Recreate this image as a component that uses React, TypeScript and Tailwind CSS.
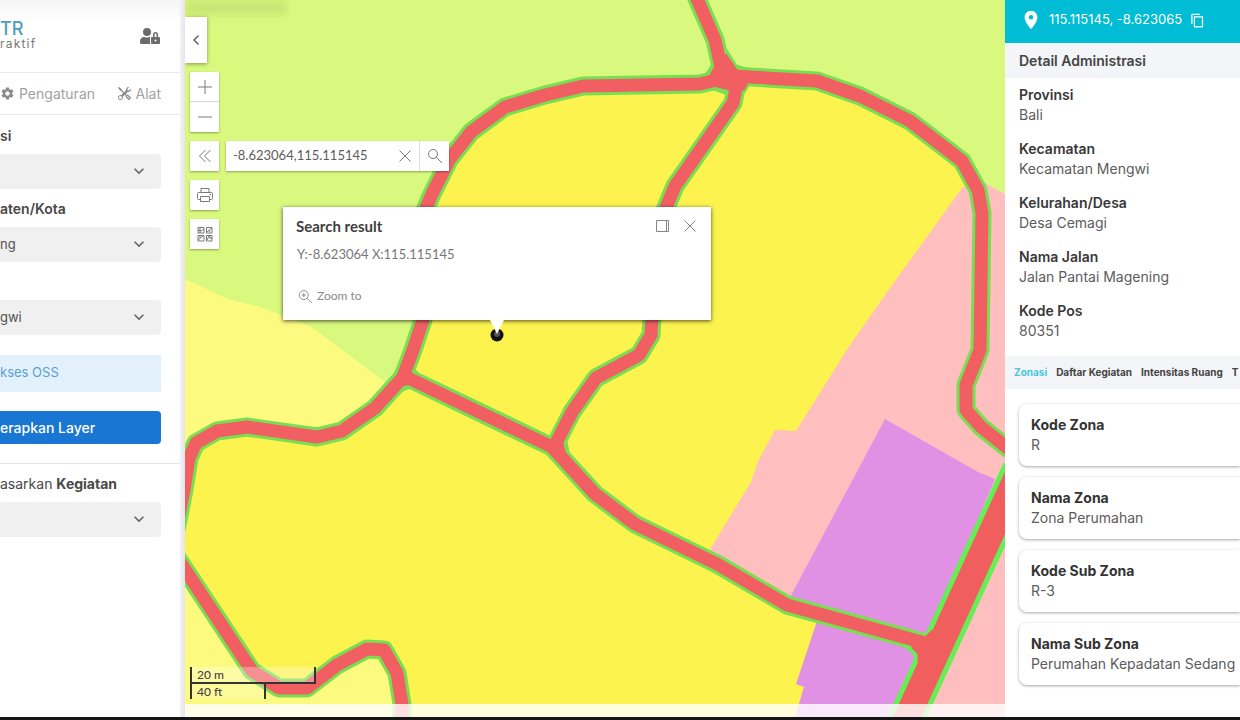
import type { ReactNode } from "react";
import { FaUserLock } from "react-icons/fa";
import { BsTools } from "react-icons/bs";
import { MdContentCopy, MdExpandMore, MdLocationOn, MdSettings } from "react-icons/md";
import { ChevronLeft } from "lucide-react";

const thinRoads = [
  "M404 374L413 350L423 320L423 215L432 194L449 160L471 132L505 107L545 95L583 86L700 84L733 76L817 81L860 96L910 121L962 161L978 190L982 213L980 350L966 385L966 410L981 427L1010 450",
  "M695 -6L715 40L723 76",
  "M738 78L733 103L675 186L663 215L652 318L651 335L639 355L596 378L572 412L554 447",
  "M404 376L552 447L595 494L635 524L717 564L787 605L925 643",
  "M404 376L375 408L342 431L317 437L247 427L217 431L196 443L189 458L184 490L176 530",
  "M176 556L252 671L279 688L307 688L337 665L367 649L384 650L397 673L402 704L402 724",
];

function Roads() {
  return (
    <g fill="none" strokeLinejoin="round">
      <g stroke="#79df52">
        {thinRoads.map((d) => (
          <path key={d} d={d} strokeWidth="19" />
        ))}
        <path d="M712 66L726 50L736 66L756 72L744 92L728 94L700 84Z" fill="#79df52" strokeWidth="3" />
        <path d="M402 360L416 372L424 382L402 390L390 384Z" fill="#79df52" strokeWidth="3" />
        <path d="M553 434L565 438L569 456L562 462L541 447Z" fill="#79df52" strokeWidth="3" />
      </g>
      <path d="M1020 470L904 724" stroke="#66ee55" strokeWidth="36" />
      <path d="M917 655L913 650L906 645L930 640L934 625L940 660L917 664Z" fill="#66ee55" stroke="#66ee55" strokeWidth="6" />
      <g stroke="#f15f62">
        {thinRoads.map((d) => (
          <path key={d} d={d} strokeWidth="13" />
        ))}
        <path d="M715 66L726 54L737 70L752 76L744 90L730 90L705 84Z" fill="#f15f62" strokeWidth="1" />
        <path d="M403 364L413 374L420 382L402 386L393 383Z" fill="#f15f62" strokeWidth="1" />
        <path d="M554 437L562 440L566 455L561 458L543 446Z" fill="#f15f62" strokeWidth="1" />
        <path d="M1020 470L904 724" stroke="#f05f5e" strokeWidth="26" />
        <path d="M912 639L924 638L932 630L936 666L918 662L918 654L912 648Z" fill="#f05f5e" />
      </g>
    </g>
  );
}

function ZoningMap() {
  return (
    <svg
      className="absolute inset-0 h-full w-full"
      viewBox="185 0 820 717"
      preserveAspectRatio="xMidYMid slice"
      aria-hidden="true"
    >
      <rect x="-400" y="-400" width="2000" height="1600" fill="#d8f97e" />
      <path d="M185 279L228 299L260 307L310 326L385 382L375 408L315 437L185 460Z" fill="#fdfa80" />
      <path
        d="M185 717V470L196 443L247 428L317 437L375 408L404 376L423 320V215L449 160L505 107L583 86L733 78L817 81L910 121L962 161L980 200L960 440L850 640V717Z"
        fill="#fdf34f"
      />
      <path d="M185 717V565L252 671L279 688L307 688L367 649L384 650L402 717Z" fill="#fdfa80" />
      <path
        d="M962 188L979 180L1005 194V717H900L925 643L785 605L709 551L751 482L758 461L775 430L796 431L848 348L885 295Z"
        fill="#ffbfbf"
      />
      <path d="M885 419L978 472L995 479L927 640L787 603Z" fill="#e091e4" />
      <path d="M820 612L796 684L804 687L795 717H900L925 643Z" fill="#e091e4" />
      <Roads />
    </svg>
  );
}

function MapButton({ label, children }: { label: string; children: ReactNode }) {
  return (
    <button
      type="button"
      aria-label={label}
      className="flex h-[30px] w-[29px] items-center justify-center bg-white text-[#7a7a7a] shadow-[0_1px_2px_rgba(0,0,0,0.35)]"
    >
      {children}
    </button>
  );
}

function Line({ d, size = 16 }: { d: string; size?: number }) {
  return (
    <svg width={size} height={size} viewBox="0 0 16 16" fill="none" stroke="currentColor" strokeWidth="1">
      <path d={d} />
    </svg>
  );
}

const icons = {
  plus: "M1 8H15M8 1V15",
  minus: "M1 8H15",
  collapse: "M8.500 2L2.500 8L8.500 14M13.500 2L7.500 8L13.500 14",
  print: "M4 5.500V1.500H12V5.500M3.500 12.500H1.500Q.5 12.500 .5 11.500V6.500Q.5 5.500 1.500 5.500H14.500Q15.500 5.500 15.500 6.500V11.500Q15.500 12.500 14.500 12.500H12.500M3.500 9.500H12.500V14.500H3.500ZM12.500 7.500H14",
  close: "M2.500 2.500L13.500 13.500M13.500 2.500L2.500 13.500",
  search: "M10.500 6A4.500 4.500 0 1 1 1.500 6A4.500 4.500 0 1 1 10.500 6M9.300 9.300L15 15",
  zoom: "M11 6.500A4.800 4.800 0 1 1 1.400 6.500A4.800 4.800 0 1 1 11 6.500M9.700 10L15 15M4 6.500H8.400M6.200 4.300V8.700",
  dock: "M2.500 2.500H14.500V13.500H2.500ZM12.500 2.500V13.500",
  grid: "M1 1.500H7V7H1ZM9.500 1.500H15V7H9.500ZM1 9.500H7V15H1ZM9.500 9.500H15V15H9.500ZM1 4L4 5L7 3M3 1.500V7M10 6L15 2M11.500 4L13 6M1 14L6 10M3 10V12M10 14L12 10L15 13M12 12H15",
};

function SelectField({ label, bold, value }: { label: ReactNode; bold?: boolean; value: string }) {
  return (
    <label className="block">
      <span className={`block h-5 text-[14px] leading-5 whitespace-nowrap text-[#484848] ${bold ? "font-semibold" : ""}`}>
        {label}
      </span>
      <span className="relative mt-2 block">
        <select className="block h-[35px] w-full appearance-none rounded-r bg-[#f0f0f0] text-[13px] text-[#505050]">
          <option>{value}</option>
        </select>
        <MdExpandMore className="pointer-events-none absolute top-[7px] right-3 size-5 text-[#666]" />
      </span>
    </label>
  );
}

function Sidebar() {
  return (
    <aside className="w-[180px] shrink-0 overflow-hidden bg-white">
      <header className="flex h-[73px] items-start justify-between border-b border-[#e8e8e8] bg-linear-to-b from-[#f4f4f4] to-white to-30% pt-5 pr-5">
        <div>
          <div className="text-[18px] leading-[18px] font-medium text-[#4a9fc0]">TR</div>
          <div className="text-[12px] leading-[12px] tracking-widest text-[#777]">raktif</div>
        </div>
        <button type="button" aria-label="Masuk" className="mt-[6px]">
          <FaUserLock className="size-5 text-[#6b6b6b]" />
        </button>
      </header>
      <nav className="flex h-[42px] items-center justify-between border-b border-[#e8e8e8] pr-[19px] text-[14px] text-[#a2a2a2]">
        <a href="#pengaturan" className="flex items-center gap-1">
          <MdSettings className="size-[15px] text-[#8a8a8a]" />
          Pengaturan
        </a>
        <a href="#alat" className="flex items-center gap-[5px]">
          <BsTools className="size-[13px] text-[#8a8a8a]" />
          Alat
        </a>
      </nav>
      <form className="flex flex-col pt-[11px]">
        <div className="flex flex-col gap-[10px] pr-[19px]">
          <SelectField label="si" bold value="" />
          <SelectField label="aten/Kota" bold value="ng" />
          <SelectField label="" value="gwi" />
        </div>
        <div className="mt-5 mr-[19px] h-[37px] bg-[#e3f1fd] text-[13px] leading-[35px] text-[#5b9fd0]">kses OSS</div>
        <button
          type="button"
          className="mt-[19px] mr-[19px] flex h-[33px] items-center rounded-r bg-[#1976d2] text-[14px] font-medium text-white"
        >
          erapkan Layer
        </button>
        <div className="mt-[19px] border-t border-[#e4e4e4] pt-[10px] pr-[19px]">
          <SelectField
            label={
              <>
                asarkan <b className="font-bold">Kegiatan</b>
              </>
            }
            value=""
          />
        </div>
      </form>
    </aside>
  );
}

function SearchPopup() {
  return (
    <section className="absolute top-[207px] left-[98px] w-[428px] bg-white font-[Lato,sans-serif] shadow-[0_1px_4px_rgba(0,0,0,0.7)]">
      <div className="flex items-center justify-between pt-[9px] pr-[13px] pl-[13px]">
        <h2 className="text-[15px] leading-5 font-bold text-[#404040]">Search result</h2>
        <div className="flex gap-3 text-[#858585]">
          <button type="button" aria-label="Dock">
            <Line d={icons.dock} />
          </button>
          <button type="button" aria-label="Close">
            <Line d={icons.close} />
          </button>
        </div>
      </div>
      <p className="mt-2 pl-[14px] text-[13px] leading-5 text-[#777]">Y:-8.623064 X:115.115145</p>
      <button type="button" className="mt-[22px] mb-[14px] ml-[15px] flex items-center gap-1 text-[12px] leading-5 text-[#8a8a8a]">
        <Line d={icons.zoom} size={15} />
        Zoom to
      </button>
      <svg className="absolute top-full left-[204px]" width="20" height="23" viewBox="0 0 20 23" aria-hidden="true">
        <circle cx="10" cy="15" r="6.500" fill="#111" />
        <circle cx="10" cy="14" r="3" fill="#555" />
        <path d="M3 0H17L10 14Z" fill="#fff" />
      </svg>
    </section>
  );
}

function MapView() {
  return (
    <main className="relative min-w-0 flex-1 overflow-hidden">
      <ZoningMap />
      <div className="absolute top-0 left-0 h-[15px] w-[102px] bg-black/7 blur-[3px]" />
      <button
        type="button"
        aria-label="Tutup panel"
        className="absolute top-[17px] left-0 flex h-[46px] w-[22px] items-center justify-center bg-white text-[#555] shadow-[0_1px_4px_rgba(0,0,0,0.4)]"
      >
        <ChevronLeft className="size-4" />
      </button>
      <div className="absolute top-[72px] left-[5px] flex flex-col gap-[9px]">
        <div className="flex flex-col divide-y divide-[#ddd]">
          <MapButton label="Zoom in">
            <Line d={icons.plus} />
          </MapButton>
          <MapButton label="Zoom out">
            <Line d={icons.minus} />
          </MapButton>
        </div>
        <div className="flex gap-[7px]">
          <MapButton label="Collapse">
            <Line d={icons.collapse} />
          </MapButton>
          <form className="flex h-[30px] bg-white text-[#7a7a7a] shadow-[0_1px_2px_rgba(0,0,0,0.35)]">
            <input
              aria-label="Search"
              defaultValue="-8.623064,115.115145"
              className="w-[164px] pl-[7px] font-[Lato,sans-serif] text-[13px] text-[#5c5c5c] outline-none"
            />
            <button type="button" aria-label="Clear" className="flex w-[29px] items-center justify-center">
              <Line d={icons.close} />
            </button>
            <button type="button" aria-label="Find" className="flex w-[30px] items-center justify-center border-l border-[#ddd]">
              <Line d={icons.search} />
            </button>
          </form>
        </div>
        <MapButton label="Print">
          <Line d={icons.print} />
        </MapButton>
        <MapButton label="Basemap">
          <Line d={icons.grid} />
        </MapButton>
      </div>
      <SearchPopup />
      <div className="absolute bottom-[18px] left-[5px] font-[Lato,sans-serif] text-[12px] leading-[15px] font-medium text-[#444]">
        <div className="w-[126px] border-r-2 border-b-2 border-l-2 border-[#333] bg-white/30 pl-[5px]">20 m</div>
        <div className="w-[76px] border-r-2 border-l-2 border-[#333] bg-white/20 pl-[5px]">40 ft</div>
      </div>
      <div className="absolute inset-x-0 bottom-0 h-[13px] bg-white/80" />
    </main>
  );
}

const administration = [
  ["Provinsi", "Bali"],
  ["Kecamatan", "Kecamatan Mengwi"],
  ["Kelurahan/Desa", "Desa Cemagi"],
  ["Nama Jalan", "Jalan Pantai Magening"],
  ["Kode Pos", "80351"],
];

const zones = [
  ["Kode Zona", "R"],
  ["Nama Zona", "Zona Perumahan"],
  ["Kode Sub Zona", "R-3"],
  ["Nama Sub Zona", "Perumahan Kepadatan Sedang"],
];

function DetailPanel() {
  return (
    <aside className="w-[235px] shrink-0 overflow-hidden bg-white text-[14px] whitespace-nowrap text-[#5c5c5c]">
      <header className="flex h-[43px] items-center bg-[#00bcd4] pb-[3px] pl-[15px] text-[13px] text-white">
        <MdLocationOn className="size-[22px]" />
        <span className="ml-[7px]">115.115145, -8.623065</span>
        <button type="button" aria-label="Salin" className="ml-2">
          <MdContentCopy className="size-[15px]" />
        </button>
      </header>
      <h2 className="h-[35px] bg-[#f4f5f9] pl-[14px] leading-[35px] font-semibold text-[#444]">Detail Administrasi</h2>
      <dl className="flex h-[278px] flex-col gap-[14px] pt-[7px] pl-[14px]">
        {administration.map(([name, value]) => (
          <div key={name} className="leading-5">
            <dt className="font-semibold text-[#383838]">{name}</dt>
            <dd>{value}</dd>
          </div>
        ))}
      </dl>
      <nav className="flex h-[33px] items-center gap-[9px] bg-[#f4f5f9] pl-[9px] text-[10px] font-bold text-[#444]">
        <a href="#zonasi" className="text-[#45c8dc]">
          Zonasi
        </a>
        <a href="#kegiatan">Daftar Kegiatan</a>
        <a href="#intensitas">Intensitas Ruang</a>
        <a href="#t">T</a>
      </nav>
      <dl className="flex flex-col gap-[11px] pt-[15px] pb-4 pl-[14px]">
        {zones.map(([name, value]) => (
          <div
            key={name}
            className="h-[62px] rounded-l-lg bg-white pt-[11px] pl-3 leading-5 shadow-[0_1px_3px_rgba(0,0,0,0.35)]"
          >
            <dt className="font-bold text-[#333]">{name}</dt>
            <dd>{value}</dd>
          </div>
        ))}
      </dl>
    </aside>
  );
}

export default function App() {
  return (
    <div className="flex min-h-screen border-b-3 border-[#151515] bg-white font-[Inter,sans-serif]">
      <Sidebar />
      <div className="w-[5px] shrink-0 bg-linear-to-r from-[#f4f4f6] to-[#e4e4ea]" />
      <MapView />
      <DetailPanel />
    </div>
  );
}
